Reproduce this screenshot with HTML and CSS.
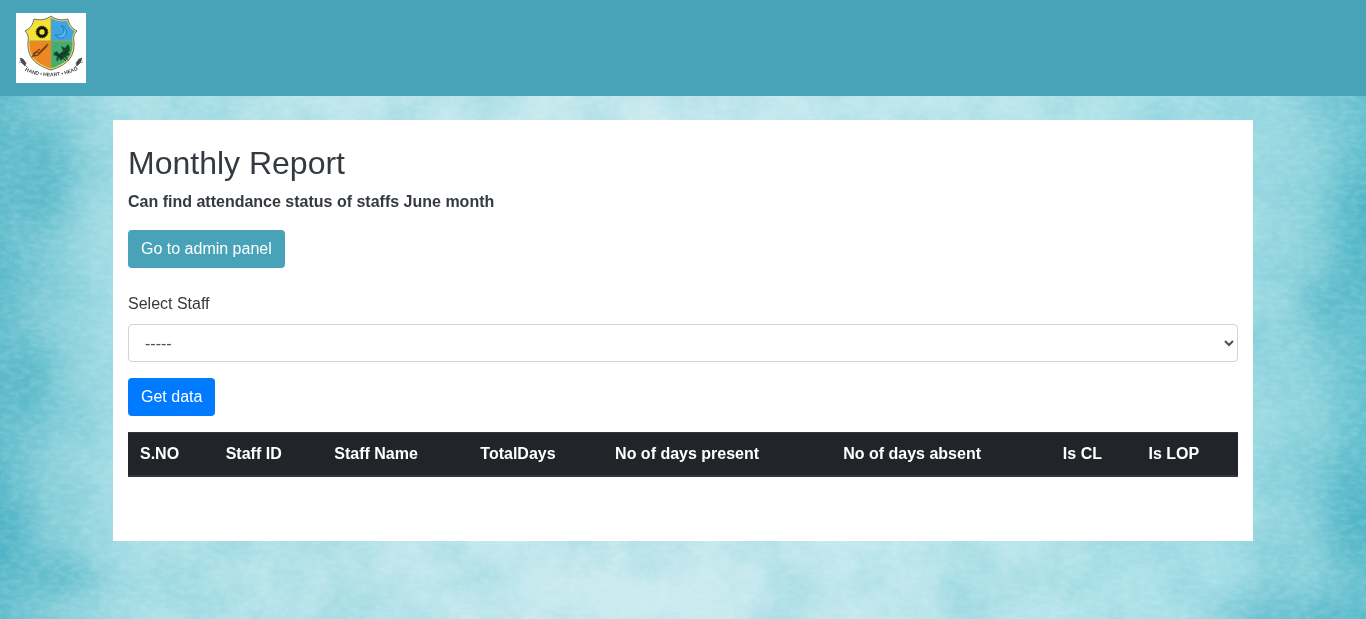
FILE: index.html
```html
<!DOCTYPE html>
<html lang="en">
<head>
  <meta charset="utf-8">
  <meta name="viewport" content="width=device-width, initial-scale=1">
  <title>Monthly Report</title>
  <link rel="stylesheet" href="styles.css">
</head>
<body>
  <svg class="backdrop" aria-hidden="true" viewBox="0 0 1366 619" preserveAspectRatio="none">
    <defs>
      <linearGradient id="wash">
        <stop offset="0" stop-color="#62bccc"/>
        <stop offset=".035" stop-color="#86ced9"/>
        <stop offset=".085" stop-color="#a6dde5"/>
        <stop offset=".2" stop-color="#b9e4ea"/>
        <stop offset=".48" stop-color="#cbeaef"/>
        <stop offset=".75" stop-color="#b9e5eb"/>
        <stop offset=".9" stop-color="#a2dce5"/>
        <stop offset=".96" stop-color="#8cd2dc"/>
        <stop offset="1" stop-color="#66c0cf"/>
      </linearGradient>
      <filter id="soft" x="-60%" y="-60%" width="220%" height="220%"><feGaussianBlur stdDeviation="16"/></filter>
      <filter id="blotch" x="0" y="0" width="100%" height="100%" color-interpolation-filters="sRGB">
        <feTurbulence type="fractalNoise" baseFrequency=".016 .016" numOctaves="5" seed="8"/>
        <feColorMatrix values="0 0 0 0 .24  0 0 0 0 .67  0 0 0 0 .75  1.2 0 0 0 -.42"/>
      </filter>
      <filter id="grain" x="0" y="0" width="100%" height="100%" color-interpolation-filters="sRGB">
        <feTurbulence type="fractalNoise" baseFrequency=".1 .2" numOctaves="3" seed="3"/>
        <feColorMatrix values="0 0 0 0 .9  0 0 0 0 1  0 0 0 0 1  .9 0 0 0 -.3"/>
      </filter>
    </defs>
    <rect width="1366" height="619" fill="url(#wash)"/>
    <g filter="url(#soft)" fill="#3fabc0" opacity=".55">
      <ellipse cx="45" cy="175" rx="28" ry="60"/>
      <ellipse cx="0" cy="535" rx="24" ry="45"/>
      <ellipse cx="30" cy="380" rx="18" ry="45"/>
      <ellipse cx="60" cy="575" rx="36" ry="20"/>
      <ellipse cx="1366" cy="240" rx="25" ry="65"/>
      <ellipse cx="1325" cy="310" rx="20" ry="28"/>
      <ellipse cx="1350" cy="510" rx="28" ry="55"/>
      <ellipse cx="1300" cy="620" rx="80" ry="22"/>
    </g>
    <rect width="1366" height="619" filter="url(#blotch)" opacity=".34"/>
    <rect width="1366" height="619" filter="url(#grain)" opacity=".35"/>
  </svg>

  <header class="navbar">
    <a class="brand" href="#" aria-label="Home">
      <svg class="logo" viewBox="0 0 70 70" aria-hidden="true">
        <defs>
          <path id="outline" d="M35 3C31 6 26 8 18 6C17 11 15 15 9 18C12 21 13 24 12 29C11 44 19 52 35 57C51 52 59 44 58 29C57 24 58 21 61 18C55 15 53 11 52 6C44 8 39 6 35 3Z"/>
          <clipPath id="shield"><use href="#outline"/></clipPath>
          <path id="motto" d="M7 57Q35 70 64 56"/>
        </defs>
        <rect width="70" height="70" fill="#fff"/>
        <g clip-path="url(#shield)">
          <rect width="35" height="28" fill="#f4e331"/>
          <rect x="35" width="35" height="28" fill="#3fa4e2"/>
          <rect y="28" width="35" height="30" fill="#ef8624"/>
          <rect x="35" y="28" width="35" height="30" fill="#45ad70"/>
          <path d="M35 2V58M9 28H61" stroke="#a5a04a" stroke-width="1"/>
          <use href="#outline" fill="none" stroke="#e8d869" stroke-width="3"/>
        </g>
        <use href="#outline" fill="none" stroke="#77745c" stroke-width="1"/>
        <circle cx="26" cy="19" r="4.2" fill="none" stroke="#171708" stroke-width="3"/>
        <circle cx="26" cy="19" r="5.8" fill="none" stroke="#171708" stroke-width="1" stroke-dasharray="1.5 1"/>
        <path d="M45 13C51 16 47 24 39 22C44 29 53 23 50 17C49 14 47 13 45 13Z" fill="#55b5ed" stroke="#216baa" stroke-width=".8"/>
        <path d="M16 44L20 39L23 40L32 31M18 43L22 42L31 33M17 41L24 36" fill="none" stroke="#74400e" stroke-width="1.3"/>
        <path d="M37 42L41 38L43 41L47 38L45 33L49 35L52 31L54 35L52 39L54 42L50 43L53 48L48 44L45 48L43 44L40 48L41 43Z" fill="#16492d"/>
        <path d="M38 39L43 43L54 37M41 48L45 43L50 48" fill="none" stroke="#102f20" stroke-width="1"/>
        <g fill="#4a4a4a" stroke="#4a4a4a" stroke-width=".6">
          <path d="M4 45L7 46L10 50L9 53L6 50ZM66 45L63 46L60 50L61 53L64 50Z"/>
          <path d="M3 49L7 50L12 55M67 49L63 50L58 55M4 47L9 52M66 47L61 52" fill="none"/>
        </g>
        <text class="motto"><textPath href="#motto" startOffset="50%">HAND • HEART • HEAD</textPath></text>
      </svg>
    </a>
  </header>

  <main class="container">
    <h2 class="title">Monthly Report</h2>
    <p class="lead">Can find attendance status of staffs June month</p>
    <a class="btn btn-info" href="#">Go to admin panel</a>
    <form class="staff-form">
      <label class="label" for="staff">Select Staff</label>
      <select class="select" id="staff" name="staff">
        <option>-----</option>
      </select>
      <button class="btn btn-primary" type="submit">Get data</button>
    </form>
    <table class="table">
      <thead>
        <tr>
          <th scope="col">S.NO</th>
          <th scope="col">Staff ID</th>
          <th scope="col">Staff Name</th>
          <th scope="col">TotalDays</th>
          <th scope="col">No of days present</th>
          <th scope="col">No of days absent</th>
          <th scope="col">Is CL</th>
          <th scope="col">Is LOP</th>
        </tr>
      </thead>
      <tbody></tbody>
    </table>
  </main>
</body>
</html>
```
FILE: styles.css
```css
*,
*::before,
*::after {
  box-sizing: border-box;
}

body {
  margin: 0;
  min-height: 100vh;
  background: #b6e4ea;
  color: #343a40;
  font-family: "Liberation Sans", Arial, sans-serif;
  font-size: 16px;
  line-height: 24px;
}

.backdrop {
  position: fixed;
  inset: 0;
  z-index: -1;
  width: 100%;
  height: 100%;
}

.navbar {
  display: flex;
  align-items: center;
  padding: 13px 16px;
  background: #48a2b8;
}

.brand,
.logo {
  display: block;
}

.logo {
  width: 70px;
  height: 70px;
}

.motto {
  fill: #444;
  font-size: 5px;
  font-weight: bold;
  text-anchor: middle;
}

.container {
  width: 100%;
  max-width: 1140px;
  margin: 24px auto;
  padding: 24px 15px 64px;
  background: #fff;
}

.title {
  margin: 0 0 8px;
  font-size: 32px;
  font-weight: 500;
  line-height: 38px;
}

.lead {
  margin: 0 0 16px;
  font-weight: bold;
}

.btn {
  display: inline-block;
  padding: 6px 12px;
  border: 1px solid transparent;
  border-radius: 4px;
  color: #fff;
  font: inherit;
  text-decoration: none;
  cursor: pointer;
}

.btn-info {
  background: #48a2b8;
}

.btn-primary {
  background: #007bff;
}

.staff-form {
  display: flex;
  flex-direction: column;
  align-items: flex-start;
  margin: 24px 0 16px;
}

.label {
  margin-bottom: 8px;
}

.select {
  width: 100%;
  height: 38px;
  margin-bottom: 16px;
  padding: 6px 12px;
  border: 1px solid #ced4da;
  border-radius: 4px;
  background: #fff;
  color: #495057;
  font: inherit;
}

.table {
  width: 100%;
  border-collapse: collapse;
}

.table th {
  padding: 9px 12px;
  border-top: 1px solid #32383e;
  border-bottom: 2px solid #32383e;
  background: #212529;
  color: #fff;
  text-align: left;
}
```
